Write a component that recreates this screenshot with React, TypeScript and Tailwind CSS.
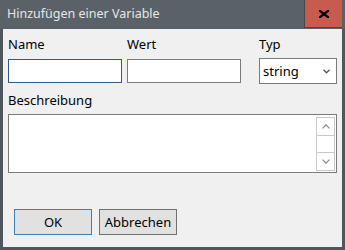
export default function App() {
  const font = { fontFamily: "'Noto Sans', 'Open Sans', sans-serif" };
  return (
    <div className="w-[345px] h-[250px] flex flex-col bg-[#4f565c] text-[13px] text-black" style={font}>
      {/* Title bar */}
      <div className="h-[29px] flex items-start shrink-0 bg-[#5a6268]">
        <div className="flex-1 pl-[7px] pt-[5px] leading-[18px] text-[12.5px] text-[#e6e6e6]">Hinzufügen einer Variable</div>
        <button className="w-[38px] h-[28px] flex items-center justify-center bg-[#c65b4e] border-l border-b border-[#44494e] mr-[3px]">
          <svg width="10" height="8" viewBox="0 0 10 8" fill="none" stroke="#000" strokeWidth="2.2" strokeLinecap="square">
            <path d="M1 0.8L9 7.2M9 0.8L1 7.2" />
          </svg>
        </button>
      </div>

      {/* Body */}
      <div className="flex-1 flex flex-col mx-[3px] mb-[3px] bg-[#f0f0f0] px-[5px]">
        <div className="flex mt-[7px]">
          <div className="flex flex-col w-[114px]">
            <span className="leading-[16px]">Name</span>
            <div className="mt-[7px] h-[24px] bg-white border border-[#2d5b88]" />
          </div>
          <div className="flex flex-col w-[114px] ml-[5px]">
            <span className="leading-[16px]">Wert</span>
            <div className="mt-[7px] h-[24px] bg-white border border-[#7a7a7a]" />
          </div>
          <div className="flex flex-col w-[78px] ml-[18px]">
            <span className="leading-[16px]">Typ</span>
            <div className="mt-[6px] h-[26px] bg-white border border-[#7a7a7a] flex items-center pl-[3px] pr-[6px]">
              <span className="flex-1 leading-[16px]">string</span>
              <svg width="7" height="5" viewBox="0 0 7 5" fill="none" stroke="#555" strokeWidth="1.3">
                <path d="M0.5 0.8L3.5 3.8L6.5 0.8" />
              </svg>
            </div>
          </div>
        </div>

        <span className="mt-[8px] leading-[16px]">Beschreibung</span>
        <div className="mt-[6px] h-[59px] bg-white border border-[#7a7a7a] flex justify-end pt-[2px] pb-[1px] pr-[1px]">
          <div className="w-[19px] flex flex-col border border-[#c8c8c8]">
            <div className="h-[18px] flex items-center justify-center border-b border-[#c8c8c8]">
              <svg width="8" height="5" viewBox="0 0 8 5" fill="none" stroke="#888" strokeWidth="1.2">
                <path d="M0.5 4.3L4 0.8L7.5 4.3" />
              </svg>
            </div>
            <div className="flex-1" />
            <div className="h-[18px] flex items-center justify-center border-t border-[#c8c8c8]">
              <svg width="8" height="5" viewBox="0 0 8 5" fill="none" stroke="#888" strokeWidth="1.2">
                <path d="M0.5 0.7L4 4.2L7.5 0.7" />
              </svg>
            </div>
          </div>
        </div>

        <div className="flex mt-[36px] ml-[6px] gap-[7px]">
          <button className="w-[78px] h-[26px] bg-[#e1e1e1] border border-[#3c7fb1] leading-[16px]">OK</button>
          <button className="w-[78px] h-[26px] bg-[#e1e1e1] border border-[#707070] leading-[16px]">Abbrechen</button>
        </div>
      </div>
    </div>
  );
}
